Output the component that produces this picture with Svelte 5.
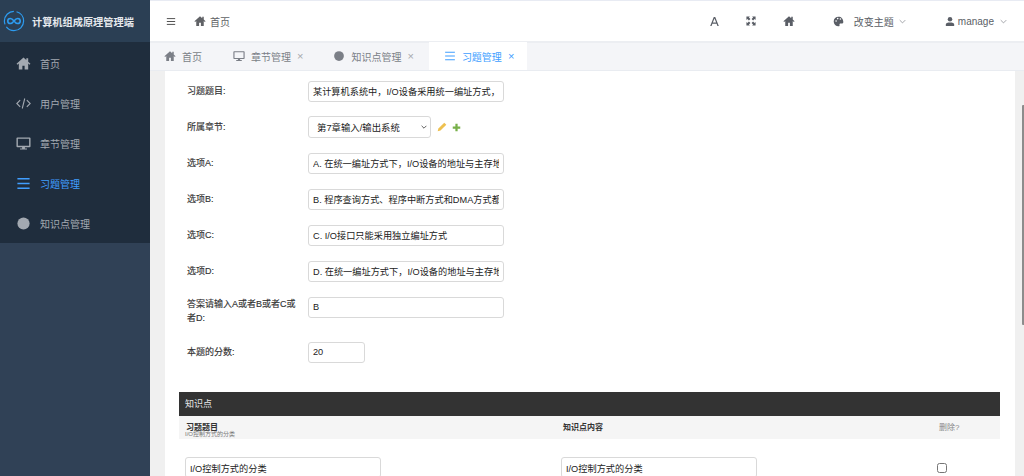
<script>
  const menus = [
    { id: 'home', title: '首页' },
    { id: 'code', title: '用户管理' },
    { id: 'monitor', title: '章节管理' },
    { id: 'list', title: '习题管理', active: true },
    { id: 'circle', title: '知识点管理' }
  ]
  const tabs = [
    { id: 'home', title: '首页' },
    { id: 'monitor', title: '章节管理', close: true },
    { id: 'circle', title: '知识点管理', close: true },
    { id: 'list', title: '习题管理', close: true, active: true }
  ]
  const fields = [
    { label: '选项A:', value: 'A. 在统一编址方式下，I/O设备的地址与主存地址统一编址' },
    { label: '选项B:', value: 'B. 程序查询方式、程序中断方式和DMA方式都需要' },
    { label: '选项C:', value: 'C. I/O接口只能采用独立编址方式' },
    { label: '选项D:', value: 'D. 在统一编址方式下，I/O设备的地址与主存地址统一编址' }
  ]
</script>

{#snippet icon(id)}
  {#if id == 'home'}
    <svg viewBox="0 0 16 16" class="ico"><path d="M8 1.500 .6 8.200l.9 1L3 7.900V14.500h3.800v-4.200h2.400v4.200H13V7.900l1.500 1.300.9-1L13 6V2.400h-2v1.800z" fill="currentColor"/></svg>
  {:else if id == 'code'}
    <svg viewBox="0 0 18 16" class="ico"><path d="M5 4 1 8l4 4M13 4l4 4-4 4M10.500 2 7.500 14" fill="none" stroke="currentColor" stroke-width="1.300"/></svg>
  {:else if id == 'monitor'}
    <svg viewBox="0 0 16 16" class="ico"><path fill-rule="evenodd" d="M1.500 1.500h13a1 1 0 0 1 1 1v8.500a1 1 0 0 1-1 1h-5v1.200h2.200v1.300H4.300v-1.300h2.200V12h-5a1 1 0 0 1-1-1V2.500a1 1 0 0 1 1-1zM2 3v7.500h12V3z" fill="currentColor"/></svg>
  {:else if id == 'list'}
    <svg viewBox="0 0 16 16" class="ico"><path d="M1.500 3h13M1.500 8h13M1.500 13h13" stroke="currentColor" stroke-width="1.500" fill="none"/></svg>
  {:else}
    <svg viewBox="0 0 16 16" class="ico"><circle cx="8" cy="8" r="6.500" fill="currentColor"/></svg>
  {/if}
{/snippet}

<div class="layout">
  <aside class="sidebar">
    <div class="logo">
      <svg viewBox="0 0 24 24" class="logo-mark">
        <circle cx="12" cy="12" r="10.500" fill="none" stroke="#2d9cf0" stroke-width="1.300" stroke-dasharray="26 3 20 3"/>
        <path d="M12 12c-1.500-2-2.700-2.800-4-2.800a2.800 2.800 0 0 0 0 5.600c1.300 0 2.500-.8 4-2.800s2.700-2.800 4-2.800a2.800 2.800 0 0 1 0 5.600c-1.300 0-2.500-.8-4-2.800z" fill="none" stroke="#2d9cf0" stroke-width="1.700"/>
      </svg>
      <span class="logo-title">计算机组成原理管理端</span>
    </div>
    <nav class="menu">
      {#each menus as m}
        <div class="menu-item" class:active={m.active}>
          {@render icon(m.id)}
          <span>{m.title}</span>
        </div>
      {/each}
    </nav>
  </aside>

  <div class="main">
    <header class="navbar">
      <svg viewBox="0 0 12 10" class="hamburger"><path d="M1 1.500h10M1 5h10M1 8.500h10" stroke="#444" stroke-width="1.100" fill="none"/></svg>
      <div class="crumb">
        {@render icon('home')}
        <span>首页</span>
      </div>
      <div class="right">
        <svg viewBox="0 0 12 12" class="tool tool-a"><path d="M1.300 11 5.200 1h1.600l3.900 10H9.200L8.300 8.500H3.700L2.800 11zM4.200 7h3.600L6 2.700z" fill="currentColor"/></svg>
        <svg viewBox="0 0 12 12" class="tool tool-full"><path d="M.5.500h4.200l-1.200 1.200L5.300 3.500 3.500 5.300 1.700 3.500.5 4.700zM11.500.500v4.200l-1.200-1.200L8.500 5.300 6.700 3.500l1.800-1.800L7.300.500zM.5 11.500V7.300l1.200 1.200 1.800-1.800 1.800 1.800-1.800 1.800 1.200 1.200zM11.500 11.500H7.300l1.200-1.200-1.800-1.800 1.800-1.800 1.800 1.800 1.200-1.200z" fill="currentColor"/></svg>
        <div class="tool-home">{@render icon('home')}</div>
        <div class="theme">
          <svg viewBox="0 0 16 16" class="palette"><path fill-rule="evenodd" d="M8 1a7 7 0 0 0 0 14c1.200 0 1.800-.8 1.500-1.800-.4-1.200.3-2.200 1.500-2.200h2.200c1 0 1.800-.8 1.800-2.200C15 4 12 1 8 1zM4.500 8.500a1.200 1.200 0 1 1 0-2.400 1.200 1.200 0 0 1 0 2.400zM6.800 5a1.200 1.200 0 1 1 0-2.400 1.200 1.200 0 0 1 0 2.400zm4 .6a1.200 1.200 0 1 1 0-2.400 1.200 1.200 0 0 1 0 2.400z" fill="currentColor"/></svg>
          <span class="theme-label">改变主题</span>
          <svg viewBox="0 0 10 6" class="caret"><path d="M1 1l4 4 4-4" fill="none" stroke="currentColor" stroke-width=".9"/></svg>
        </div>
        <div class="user">
          <svg viewBox="0 0 12 12" class="person"><circle cx="6" cy="3.200" r="2.700" fill="currentColor"/><path d="M1 11.500V9.500c0-1.500 2-2.300 5-2.300s5 .8 5 2.300v2z" fill="currentColor"/></svg>
          <span>manage</span>
          <svg viewBox="0 0 10 6" class="caret"><path d="M1 1l4 4 4-4" fill="none" stroke="currentColor" stroke-width=".9"/></svg>
        </div>
      </div>
    </header>

    <div class="tagbar">
      {#each tabs as t}
        <div class="tag" class:active={t.active}>
          {@render icon(t.id)}
          <span>{t.title}</span>
          {#if t.close}<span class="close">×</span>{/if}
        </div>
      {/each}
    </div>

    <div class="body">
      <div class="page">
        <div class="row">
          <label>习题题目:</label>
          <input class="input" value="某计算机系统中，I/O设备采用统一编址方式，下列说法正确的是" />
        </div>
        <div class="row">
          <label>所属章节:</label>
          <div class="select-wrap">
            <select class="select">
              <option>第7章输入/输出系统</option>
            </select>
            <svg viewBox="0 0 10 6" class="select-arrow"><path d="M1 1l4 4 4-4" fill="none" stroke="#333" stroke-width="1.300"/></svg>
          </div>
          <svg viewBox="0 0 12 12" class="pencil"><path d="M8.700.800l2.500 2.500-7 7-3.400.9.900-3.400z" fill="#eec04f"/></svg>
          <svg viewBox="0 0 12 12" class="plus"><path d="M6 1v10M1 6h10" stroke="#78b04a" stroke-width="3" fill="none"/></svg>
        </div>
        {#each fields as f}
          <div class="row">
            <label>{f.label}</label>
            <input class="input" value={f.value} />
          </div>
        {/each}
        <div class="row row-answer">
          <label>答案请输入A或者B或者C或者D:</label>
          <input class="input" value="B" />
        </div>
        <div class="row row-score">
          <label>本题的分数:</label>
          <input class="input input-small" value="20" />
        </div>

        <section class="inline-group">
          <h2>知识点</h2>
          <div class="thead">
            <div class="th th-first">
              <b>习题题目</b>
              <small>I/O控制方式的分类</small>
            </div>
            <div class="th"><b>知识点内容</b></div>
            <div class="th th-del">删除?</div>
          </div>
          <div class="tr">
            <input class="input" value="I/O控制方式的分类" />
            <input class="input" value="I/O控制方式的分类" />
            <input class="check" type="checkbox" />
          </div>
        </section>
      </div>
      <div class="scrollbar"></div>
    </div>
  </div>
</div>

<style>
  :global(body) {
    margin: 0;
    overflow: hidden;
  }
  .layout {
    display: flex;
    width: 1024px;
    height: 476px;
    overflow: hidden;
    font-family: "Liberation Sans", "Noto Sans CJK SC", sans-serif;
    color: #303133;
  }
  .ico {
    width: 14px;
    height: 14px;
    flex: none;
  }
  .sidebar {
    width: 150px;
    flex: none;
    background: #304156;
  }
  .logo {
    display: flex;
    align-items: center;
    gap: 7px;
    height: 42px;
    padding-left: 3px;
    box-sizing: border-box;
    background: #2b3f54;
  }
  .logo-mark {
    width: 22px;
    height: 22px;
    flex: none;
  }
  .logo-title {
    font-size: 10.200px;
    font-weight: 700;
    color: #e6e9ed;
    white-space: nowrap;
  }
  .menu {
    padding-top: 1px;
    background: #1f2d3d;
  }
  .menu-item {
    display: flex;
    align-items: center;
    gap: 9px;
    height: 40px;
    padding-left: 16px;
    font-size: 10px;
    color: #a3a9b1;
  }
  .menu-item .ico {
    width: 15px;
    height: 15px;
  }
  .menu-item.active {
    color: #409eff;
  }
  .main {
    flex: 1;
    display: flex;
    flex-direction: column;
    min-width: 0;
    background: #f0f0f0;
  }
  .navbar {
    display: flex;
    align-items: center;
    height: 43px;
    flex: none;
    box-sizing: border-box;
    border-top: 1px solid #e8ebf3;
    border-bottom: 2px solid #eceef2;
    background: #fff;
    font-size: 10px;
    color: #5f6368;
  }
  .hamburger {
    width: 10px;
    height: 9px;
    margin-left: 16px;
  }
  .crumb {
    display: flex;
    align-items: center;
    gap: 4px;
    margin-left: 18px;
    color: #606266;
  }
  .crumb .ico {
    width: 12px;
    height: 12px;
  }
  .right {
    display: flex;
    align-items: center;
    margin-left: auto;
    color: #5a5e66;
  }
  .tool {
    width: 11px;
    height: 11px;
  }
  .tool-a {
    margin-right: 26px;
  }
  .tool-full {
    width: 10px;
    height: 10px;
    margin-right: 27px;
  }
  .tool-home {
    display: flex;
    margin-right: 38px;
  }
  .tool-home .ico {
    width: 12px;
    height: 12px;
  }
  .theme {
    display: flex;
    align-items: center;
    margin-right: 39px;
  }
  .palette {
    width: 11px;
    height: 11px;
    margin-right: 10px;
  }
  .theme-label {
    margin-right: 5px;
  }
  .caret {
    width: 7px;
    height: 5px;
    color: #6f737b;
  }
  .user {
    display: flex;
    align-items: center;
    gap: 3px;
    margin-right: 17px;
  }
  .user .caret {
    margin-left: 3px;
  }
  .person {
    width: 10px;
    height: 11px;
  }
  .tagbar {
    display: flex;
    align-items: flex-end;
    height: 28px;
    flex: none;
    box-sizing: border-box;
    border-bottom: 1px solid #e9ecf1;
    background: #f4f5f8;
    font-size: 10px;
    color: #7b7f87;
  }
  .tag {
    display: flex;
    align-items: center;
    gap: 6px;
    height: 28px;
    padding: 0 15px;
    box-sizing: border-box;
  }
  .tag:first-child {
    padding: 0 14px;
    margin-right: 2px;
  }
  .tag .ico {
    width: 12px;
    height: 12px;
  }
  .tag.active {
    padding-right: 13px;
    background: #fff;
    color: #409eff;
  }
  .close {
    font-size: 11px;
    color: #a6a9ad;
  }
  .tag.active .close {
    color: #409eff;
  }
  .body {
    flex: 1;
    display: flex;
    min-height: 0;
    padding-left: 15px;
  }
  .page {
    width: 850px;
    flex: none;
    box-sizing: border-box;
    padding: 2px 0 0 14px;
    background: #fff;
    overflow: hidden;
  }
  .scrollbar {
    width: 2px;
    height: 220px;
    margin: 34px 0 0 auto;
    background: #8c8c8c;
    border-radius: 1px 0 0 1px;
  }
  .row {
    display: flex;
    align-items: center;
    height: 36px;
    padding-left: 8px;
    font-size: 9px;
    color: #333;
  }
  .row label {
    width: 121px;
    flex: none;
    box-sizing: border-box;
    padding-right: 6px;
    line-height: 14px;
    font-weight: 400;
    -webkit-text-stroke: .15px #333;
  }
  .input {
    width: 196px;
    height: 21px;
    box-sizing: border-box;
    padding: 0 4px;
    border: 1px solid #d9d9d9;
    border-radius: 3px;
    background: #fff;
    font: 9.200px "Liberation Sans", "Noto Sans CJK SC", sans-serif;
    color: #222;
    outline: none;
  }
  .select-wrap {
    position: relative;
    display: flex;
  }
  .select {
    width: 123px;
    height: 22px;
    box-sizing: border-box;
    padding: 0 0 0 8px;
    border: 1px solid #d9d9d9;
    border-radius: 3px;
    background: #fff;
    font: 9.400px "Liberation Sans", "Noto Sans CJK SC", sans-serif;
    color: #222;
    appearance: none;
  }
  .select-arrow {
    position: absolute;
    right: 4px;
    top: 9px;
    width: 6px;
    height: 4px;
  }
  .pencil {
    width: 10px;
    height: 10px;
    margin-left: 6px;
  }
  .plus {
    width: 9px;
    height: 9px;
    margin-left: 5px;
  }
  .row-answer label {
    margin-top: 8px;
  }
  .row-score {
    height: 44px;
    margin-top: 5px;
  }
  .input-small {
    width: 57px;
  }
  .inline-group {
    margin-top: 18px;
    width: 821px;
  }
  .inline-group h2 {
    margin: 0;
    height: 24px;
    padding-left: 6px;
    background: #333;
    color: #e8e8e8;
    font-size: 9px;
    font-weight: 400;
    line-height: 24px;
  }
  .thead {
    display: flex;
    height: 23px;
    background: #f5f5f5;
    font-size: 8px;
    color: #333;
  }
  .th {
    width: 383px;
    padding: 7px 0 0 7px;
    box-sizing: border-box;
    line-height: 10px;
    flex: none;
  }
  .th-first {
    width: 377px;
  }
  .th small {
    display: block;
    margin: -3px 0 0 -1px;
    font-size: 6px;
    line-height: 8px;
    color: #777;
  }
  .th-del {
    width: 60px;
    color: #888;
    padding-left: 0;
  }
  .tr {
    display: flex;
    align-items: center;
    margin-top: 18px;
    padding-left: 6px;
  }
  .tr .input {
    margin-right: 180px;
  }
  .check {
    width: 10px;
    height: 10px;
    margin: 0;
  }
</style>
